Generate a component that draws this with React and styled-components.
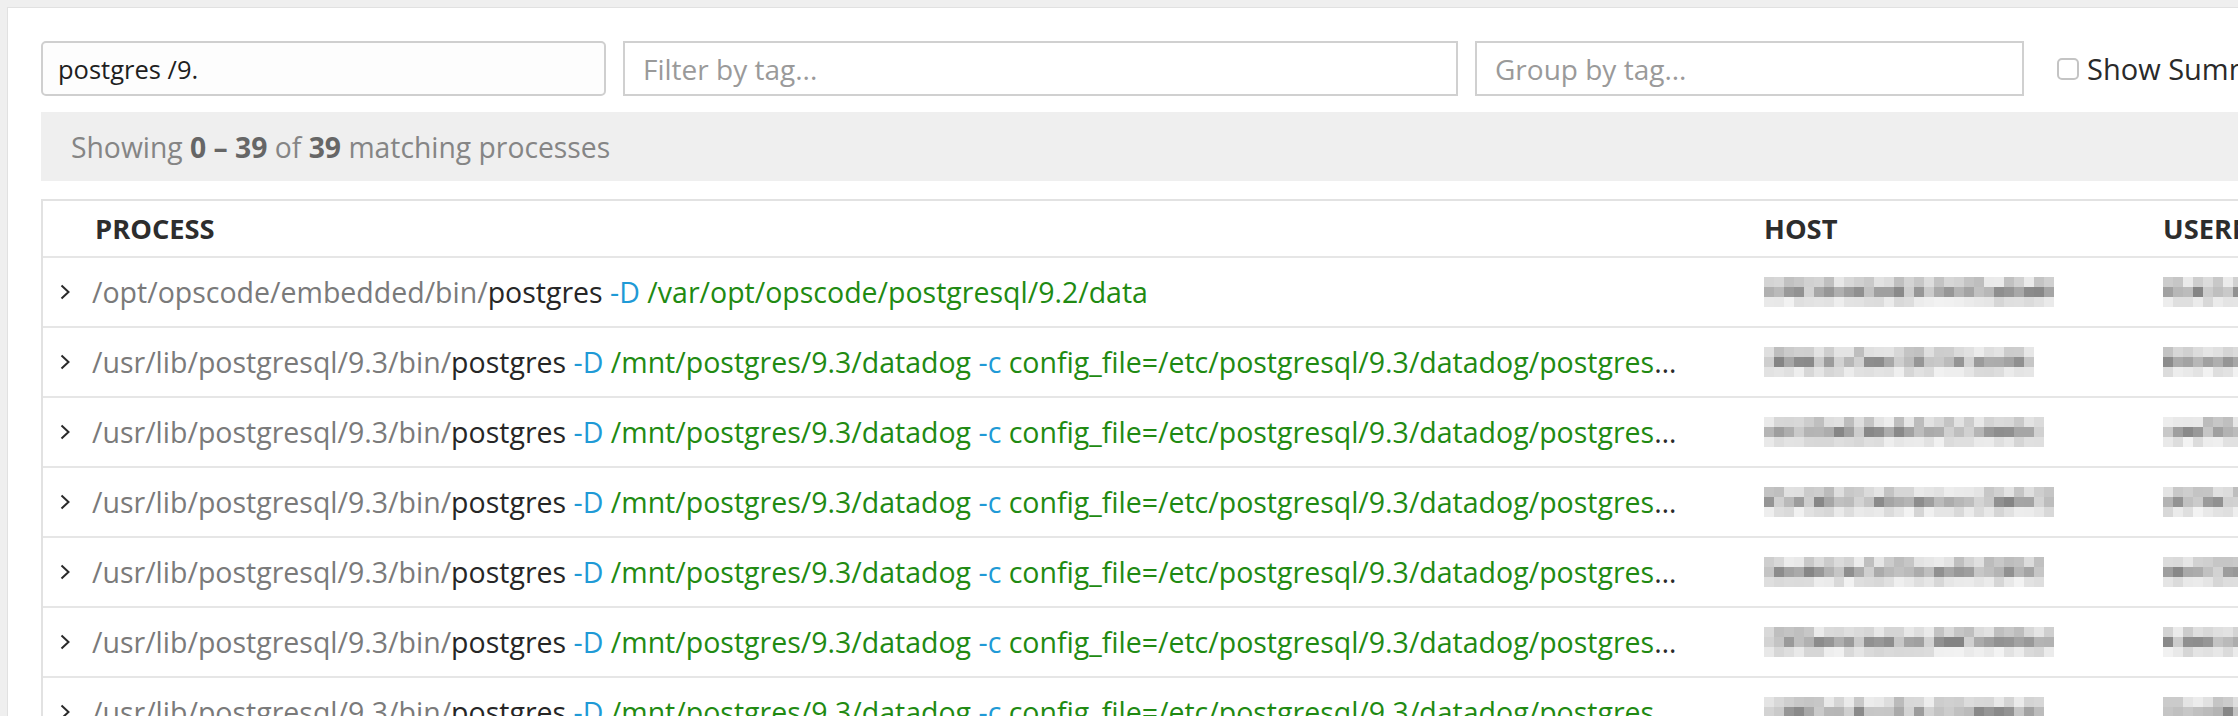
import React from "react";
import styled, { createGlobalStyle } from "styled-components";

const GlobalStyle = createGlobalStyle`
  html, body {
    margin: 0;
    padding: 0;
    background: #efefef;
    overflow: hidden;
  }
  body {
    font-family: "Open Sans", "Noto Sans", sans-serif;
  }
`;

const Frame = styled.div`
  width: 2238px;
  height: 716px;
  padding: 7px 0 0 7px;
  box-sizing: border-box;
  overflow: hidden;
`;

const Panel = styled.div`
  background: #fff;
  border: 1px solid #e1e1e1;
  border-right: none;
  border-bottom: none;
  height: 100%;
  box-sizing: border-box;
  padding: 33px 0 0 33px;
  overflow: hidden;
`;

const Toolbar = styled.div`
  display: flex;
  align-items: center;
  gap: 17px;
  height: 55px;
`;

const SearchInput = styled.div`
  flex: none;
  box-sizing: border-box;
  width: 565px;
  height: 55px;
  border: 2px solid #cfcfcf;
  border-radius: 5px;
  background: #fdfdfd;
  display: flex;
  align-items: center;
  padding-left: 15px;
  font-size: 25.5px;
  color: #1f1f1f;
  white-space: pre;
`;

const TagInput = styled.div`
  flex: none;
  box-sizing: border-box;
  width: ${(p) => p.w}px;
  height: 55px;
  border: 2px solid #d0d0d0;
  background: #fff;
  display: flex;
  align-items: center;
  padding-left: 18px;
  font-size: 28px;
  color: #9a9a9a;
`;

const CheckLabel = styled.label`
  flex: none;
  display: flex;
  align-items: center;
  gap: 8px;
  margin-left: 16px;
  font-size: 29px;
  color: #2a2a2a;
  white-space: nowrap;
`;

const Box = styled.span`
  width: 22px;
  height: 22px;
  box-sizing: border-box;
  border: 2px solid #c4c4c4;
  border-radius: 5px;
  background: #fff;
`;

const SummaryBar = styled.div`
  margin-top: 16px;
  height: 69px;
  background: #efefef;
  display: flex;
  align-items: center;
  padding-left: 30px;
  font-size: 28.3px;
  color: #858585;
  white-space: pre;
  b {
    color: #666;
    font-weight: 700;
  }
`;

const Table = styled.div`
  margin-top: 18px;
  border-top: 2px solid #e2e2e2;
  border-left: 2px solid #e2e2e2;
`;

const Row = styled.div`
  display: grid;
  grid-template-columns: 1721px 399px 1fr;
  align-items: center;
  height: ${(p) => (p.head ? 57 : 70)}px;
  box-sizing: border-box;
  border-bottom: 2px solid #e6e6e6;
`;

const HeadCell = styled.div`
  font-size: 27.3px;
  font-weight: 700;
  color: #2d2d2d;
  padding-left: ${(p) => p.pad || 0}px;
  white-space: nowrap;
  overflow: hidden;
`;

const ProcessCell = styled.div`
  display: flex;
  align-items: center;
  min-width: 0;
`;

const Chevron = styled.svg`
  flex: none;
  margin: 0 22px 0 17px;
`;

const Cmd = styled.div`
  width: 1592px;
  font-size: 28.5px;
  color: #2b2b2b;
  white-space: pre;
  overflow: hidden;
  text-overflow: ellipsis;
`;

const Part = styled.span`
  color: ${(p) =>
    ({ dim: "#7a7a7a", bin: "#262626", flag: "#1f9ad6", arg: "#218a12" }[p.kind])};
`;

const MosaicCell = styled.div`
  display: flex;
  align-items: center;
  overflow: hidden;
`;

function rand(seed) {
  let s = seed;
  return () => {
    s = (s * 9301 + 49297) % 233280;
    return s / 233280;
  };
}

const Mosaic = ({ seed, cols }) => {
  const r = rand(seed);
  const rects = [];
  for (let y = 0; y < 3; y++) {
    for (let x = 0; x < cols; x++) {
      const base = y === 0 ? 212 : y === 1 ? 172 : 228;
      const spread = y === 1 ? 80 : y === 0 ? 50 : 30;
      const v = Math.round(base + (r() - 0.5) * spread);
      const c = Math.max(120, Math.min(250, v));
      rects.push(
        <rect key={`${x}-${y}`} x={x * 10} y={y * 10} width="10" height="10" fill={`rgb(${c},${c},${c})`} />
      );
    }
  }
  return (
    <svg width={cols * 10} height="30" shapeRendering="crispEdges">
      {rects}
    </svg>
  );
};

const rows = [
  { opt: true, host: 29 },
  { host: 27 },
  { host: 28 },
  { host: 29 },
  { host: 28 },
  { host: 29 },
  { host: 28 },
];

const ProcessRow = ({ opt, host, i }) => (
  <Row>
    <ProcessCell>
      <Chevron width="10" height="16" viewBox="0 0 10 16">
        <polyline points="1.5,1.5 8.5,8 1.5,14.5" fill="none" stroke="#2a2a2a" strokeWidth="2" />
      </Chevron>
      {opt ? (
        <Cmd>
          <Part kind="dim">/opt/opscode/embedded/bin/</Part>
          <Part kind="bin">postgres</Part> <Part kind="flag">-D</Part>{" "}
          <Part kind="arg">/var/opt/opscode/postgresql/9.2/data</Part>
        </Cmd>
      ) : (
        <Cmd>
          <Part kind="dim">/usr/lib/postgresql/9.3/bin/</Part>
          <Part kind="bin">postgres</Part> <Part kind="flag">-D</Part>{" "}
          <Part kind="arg">/mnt/postgres/9.3/datadog</Part> <Part kind="flag">-c</Part>{" "}
          <Part kind="arg">config_file=/etc/postgresql/9.3/datadog/postgresql.conf</Part>
        </Cmd>
      )}
    </ProcessCell>
    <MosaicCell>
      <Mosaic seed={i * 131 + 7} cols={host} />
    </MosaicCell>
    <MosaicCell>
      <Mosaic seed={i * 71 + 3} cols={12} />
    </MosaicCell>
  </Row>
);

export default function App() {
  return (
    <Frame>
      <GlobalStyle />
      <Panel>
        <Toolbar>
          <SearchInput>postgres /9.</SearchInput>
          <TagInput w={835}>Filter by tag...</TagInput>
          <TagInput w={549}>Group by tag...</TagInput>
          <CheckLabel>
            <Box />
            Show Summary
          </CheckLabel>
        </Toolbar>
        <SummaryBar>
          Showing <b>0 – 39</b> of <b>39</b> matching processes
        </SummaryBar>
        <Table>
          <Row head>
            <HeadCell pad={52}>PROCESS</HeadCell>
            <HeadCell>HOST</HeadCell>
            <HeadCell>USERNAME</HeadCell>
          </Row>
          {rows.map((r, i) => (
            <ProcessRow key={i} i={i} {...r} />
          ))}
        </Table>
      </Panel>
    </Frame>
  );
}
